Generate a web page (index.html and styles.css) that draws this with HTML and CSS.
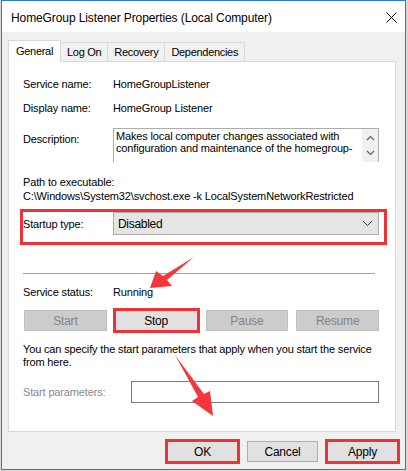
FILE: index.html
```html
<!DOCTYPE html>
<html lang="en">
<head>
    <meta charset="UTF-8">
    <title>HomeGroup Listener Properties (Local Computer)</title>
    <link rel="stylesheet" href="styles.css">
</head>
<body>
    <div class="window">
        <div class="titlebar">
            <span class="title">HomeGroup Listener Properties (Local Computer)</span>
            <svg class="close" width="11" height="11" viewBox="0 0 11 11">
                <path d="M0.5 0.5 L10.5 10.5 M10.5 0.5 L0.5 10.5" stroke="#000" stroke-width="1"/>
            </svg>
        </div>

        <div class="tabs">
            <div class="tab active">General</div>
            <div class="tab">Log On</div>
            <div class="tab">Recovery</div>
            <div class="tab">Dependencies</div>
        </div>

        <div class="panel">
            <div class="row">
                <span class="label">Service name:</span>
                <span>HomeGroupListener</span>
            </div>
            <div class="row gap10">
                <span class="label">Display name:</span>
                <span>HomeGroup Listener</span>
            </div>
            <div class="row desc-row">
                <span class="label">Description:</span>
                <div class="textbox">
                    <div class="textbox-text">Makes local computer changes associated with configuration and maintenance of the homegroup-</div>
                    <div class="scroll">
                        <svg width="9" height="6" viewBox="0 0 9 6"><path d="M1 5 L4.5 1.5 L8 5" fill="none" stroke="#606060" stroke-width="1.2"/></svg>
                        <svg width="9" height="6" viewBox="0 0 9 6"><path d="M1 1 L4.5 4.5 L8 1" fill="none" stroke="#606060" stroke-width="1.2"/></svg>
                    </div>
                </div>
            </div>
            <div class="path-label">Path to executable:</div>
            <div class="path-value">C:\Windows\System32\svchost.exe -k LocalSystemNetworkRestricted</div>

            <div class="row startup highlight-box">
                <span class="label">Startup type:</span>
                <div class="select">
                    <span>Disabled</span>
                    <svg width="11" height="7" viewBox="0 0 11 7"><path d="M1 1 L5.5 5.5 L10 1" fill="none" stroke="#333" stroke-width="1"/></svg>
                </div>
            </div>

            <div class="separator"></div>

            <div class="row status-row">
                <span class="label">Service status:</span>
                <span>Running</span>
            </div>

            <div class="actions">
                <button class="btn" disabled>Start</button>
                <button class="btn highlight">Stop</button>
                <button class="btn" disabled>Pause</button>
                <button class="btn" disabled>Resume</button>
            </div>

            <p class="note">You can specify the start parameters that apply when you start the service from here.</p>

            <div class="row params">
                <span class="label muted">Start parameters:</span>
                <div class="input"></div>
            </div>
        </div>

        <div class="footer">
            <button class="btn highlight">OK</button>
            <button class="btn">Cancel</button>
            <button class="btn highlight">Apply</button>
        </div>

        <svg class="arrows" width="408" height="471" viewBox="0 0 408 471">
            <polygon points="194,257 167,280 172,286 150,288 156,271 163,276" fill="#f2383c"/>
            <polygon points="175,355 204,394 210,391 213,416 192,401 198,397" fill="#f2383c"/>
        </svg>
    </div>
</body>
</html>
```

FILE: styles.css
```css
body {
    margin: 0;
    background-color: #d8d8d8;
    font-family: "Liberation Sans", Arial, sans-serif;
    font-size: 11px;
    letter-spacing: -0.15px;
    color: #000;
}
.window {
    position: relative;
    width: 403px;
    height: 468px;
    margin-left: 1px;
    border: 1px solid #2b7bd0;
    background-color: #f0f0f0;
}
.titlebar {
    height: 31px;
    background-color: #fff;
    display: flex;
    align-items: center;
    justify-content: space-between;
    padding: 0 8px 0 9px;
}
.title {
    font-size: 12px;
    letter-spacing: -0.1px;
    padding-top: 2px;
}
.close {
    margin-top: 1px;
}
.tabs {
    display: flex;
    align-items: flex-end;
    height: 21px;
    margin-top: 8px;
    padding-left: 6px;
}
.tab {
    height: 18px;
    line-height: 18px;
    padding: 0 6px;
    border: 1px solid #d9d9d9;
    border-bottom: none;
    margin-left: -1px;
    letter-spacing: -0.3px;
}
.tab.active {
    height: 21px;
    line-height: 21px;
    margin-left: 0;
    margin-bottom: -1px;
    padding: 0 7px;
    background-color: #fff;
    position: relative;
    z-index: 1;
}
.panel {
    width: 388px;
    margin-left: 6px;
    border: 1px solid #d9d9d9;
    background-color: #fff;
    padding: 15px 16px 28px 14px;
    box-sizing: border-box;
    height: 371px;
}
.row {
    display: flex;
    align-items: center;
    line-height: 14px;
}
.label {
    width: 90px;
    flex-shrink: 0;
}
.muted {
    color: #8a8a8a;
}
.gap10 {
    margin-top: 10px;
}
.desc-row {
    margin-top: 13px;
    align-items: flex-start;
}
.desc-row .label {
    margin-top: 4px;
}
.textbox {
    flex: 1;
    height: 34px;
    box-sizing: border-box;
    border: 1px solid #adadad;
    border-bottom: none;
    display: flex;
}
.textbox-text {
    flex: 1;
    padding: 1px 0 0 2px;
    line-height: 12px;
}
.scroll {
    width: 16px;
    background-color: #f0f0f0;
    display: flex;
    flex-direction: column;
    align-items: center;
    gap: 9px;
    padding-top: 6px;
}
.path-label {
    margin-top: 13px;
    line-height: 14px;
}
.path-value {
    line-height: 14px;
}
.startup {
    margin-top: 9px;
}
.highlight-box {
    position: relative;
}
.highlight-box::after {
    content: "";
    position: absolute;
    top: -3px;
    left: -3px;
    right: -8px;
    bottom: -10px;
    border: 3px solid #ee3338;
}
.select {
    flex: 1;
    height: 23px;
    box-sizing: border-box;
    border: 1px solid #acacac;
    background-color: #e5e5e5;
    display: flex;
    align-items: center;
    justify-content: space-between;
    padding: 0 5px 0 4px;
    font-size: 12px;
    letter-spacing: -0.3px;
}
.separator {
    margin: 38px 4px 0 0;
    height: 1px;
    background-color: #a0a0a0;
}
.status-row {
    margin-top: 11px;
}
.actions {
    display: grid;
    grid-template-columns: repeat(4, 1fr);
    gap: 8px;
    margin: 11px 0 0 1px;
}
.btn {
    height: 21px;
    padding: 0;
    font-family: inherit;
    font-size: 12px;
    letter-spacing: -0.2px;
    color: #000;
    background-color: #e1e1e1;
    border: 1px solid #adadad;
}
.btn:disabled {
    background-color: #cccccc;
    border-color: #bfbfbf;
    color: #838383;
}
.btn.highlight {
    outline: 3px solid #ee3338;
    outline-offset: -1px;
}
.note {
    margin: 12px 0 0;
    line-height: 13px;
}
.params {
    margin-top: 12px;
}
.params .label {
    width: 108px;
}
.input {
    flex: 1;
    height: 22px;
    box-sizing: border-box;
    border: 1px solid #7a7a7a;
}
.footer {
    display: flex;
    justify-content: flex-end;
    gap: 9px;
    padding: 9px 7px 0 0;
}
.footer .btn {
    width: 71px;
}
.arrows {
    position: absolute;
    top: -1px;
    left: -2px;
    pointer-events: none;
}
```
